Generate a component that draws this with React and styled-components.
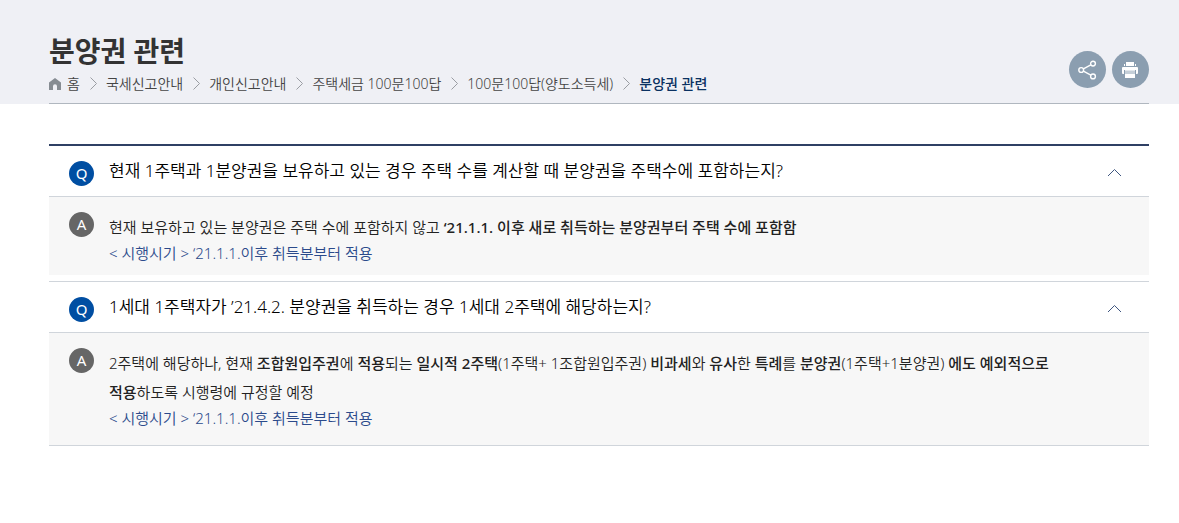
import React, {useState} from 'react';
import styled, {createGlobalStyle, css} from 'styled-components';

const GlobalStyle = createGlobalStyle`
  * {
    box-sizing: border-box;
  }

  body {
    margin: 0;
    background-color: #fff;
    color: #222;
    font-family: 'Noto Sans', 'Noto Sans CJK KR', sans-serif;
    font-size: 15px;
    font-weight: 350;
    word-break: keep-all;
  }
`;

const Header = styled.header`
  background-color: #eff0f5;
  padding: 0 30px 0 49px;
`;

const HeaderInner = styled.div`
  display: flex;
  align-items: flex-end;
  justify-content: space-between;
  padding: 30px 0 8px;
  border-bottom: 1px solid #b0b7bf;
`;

const Title = styled.h1`
  margin: 0;
  color: #333;
  font-size: 28px;
  font-weight: 700;
  line-height: 42px;
`;

const Breadcrumb = styled.ol`
  display: flex;
  align-items: center;
  margin: 0;
  padding: 0;
  list-style: none;
  font-size: 14px;
  line-height: 23px;
`;

const Crumb = styled.li`
  display: flex;
  align-items: center;
`;

const CrumbLink = styled.a`
  display: flex;
  align-items: center;
  gap: 6px;
  color: #444;
  text-decoration: none;
`;

const Current = styled.strong`
  color: #0a3161;
  font-weight: 500;
`;

const Separator = styled.svg`
  margin: 0 9px 0 10px;
`;

const Tools = styled.div`
  display: flex;
  gap: 6px;
  padding-bottom: 7px;
`;

const ToolButton = styled.button`
  display: flex;
  align-items: center;
  justify-content: center;
  width: 37px;
  height: 37px;
  padding: 0;
  border: 0;
  border-radius: 50%;
  background-color: #8b9eb0;
  cursor: pointer;
`;

const List = styled.div`
  margin: 40px 30px 0 49px;
  border-top: 2px solid #2f4064;
`;

const Item = styled.section`
  & + & {
    margin-top: 6px;
    border-top: 1px solid #d0d5db;
    border-bottom: 1px solid #d0d5db;
  }
`;

const Heading = styled.h2`
  margin: 0;
  font-weight: 350;
`;

const Question = styled.button`
  display: flex;
  align-items: flex-start;
  width: 100%;
  padding: 11px 27px 10px 20px;
  border: 0;
  background-color: #fff;
  color: #000;
  font: inherit;
  font-size: 17px;
  line-height: 28px;
  text-align: left;
  cursor: pointer;
`;

const QuestionText = styled.span`
  flex: 1;
`;

const Badge = styled.span`
  flex: none;
  width: 25px;
  height: 25px;
  margin: ${({$answer}) => ($answer ? '0 15px 0 0' : '4px 15px 0 0')};
  border-radius: 50%;
  background-color: ${({$answer}) => ($answer ? '#666' : '#004ea2')};
  color: #fff;
  font-size: 15px;
  font-weight: 400;
  line-height: 25px;
  text-align: center;
`;

const Arrow = styled.svg`
  flex: none;
  margin-top: 8px;
  ${({$open}) => !$open && css`
    transform: rotate(180deg);
  `};
`;

const Answer = styled.div`
  display: flex;
  align-items: flex-start;
  padding: 15px 60px 11px 20px;
  border-top: 1px solid #d0d5db;
  background-color: #f7f7f7;

  ${Item} + ${Item} & {
    padding-bottom: 16px;
  }
`;

const AnswerText = styled.p`
  flex: 1;
  margin: 1px 0 0;
  line-height: 29px;

  b {
    font-weight: 500;
  }
`;

const Period = styled.span`
  display: block;
  color: #2b4a8b;
  line-height: 22px;
`;

const crumbs = ['국세신고안내', '개인신고안내', '주택세금 100문100답', '100문100답(양도소득세)'];

const faqs = [
  {
    question: '현재 1주택과 1분양권을 보유하고 있는 경우 주택 수를 계산할 때 분양권을 주택수에 포함하는지?',
    answer:
      <>
        현재 보유하고 있는 분양권은 주택 수에 포함하지 않고{' '}
        <b>‘21.1.1. 이후 새로 취득하는 분양권부터 주택 수에 포함함</b>
      </>,
  },
  {
    question: '1세대 1주택자가 ’21.4.2. 분양권을 취득하는 경우 1세대 2주택에 해당하는지?',
    answer:
      <>
        2주택에 해당하나, 현재 <b>조합원입주권</b>에 <b>적용</b>되는 <b>일시적 2주택</b>(1주택+ 1조합원입주권){' '}
        <b>비과세</b>와 <b>유사</b>한 <b>특례</b>를 <b>분양권</b>(1주택+1분양권) <b>에도 예외적으로 적용</b>하도록
        시행령에 규정할 예정
      </>,
  },
];

const Chevron = () =>
  <Separator width="7" height="13" viewBox="0 0 7 13" fill="none" stroke="#9a9da3" aria-hidden="true">
    <path d="M.5.5l6 6-6 6" />
  </Separator>;

const HomeIcon = () =>
  <svg width="12" height="12" viewBox="0 0 12 12" fill="#868c92" aria-hidden="true">
    <path d="M6 0l6 4.6V12H8V8.2a2 2 0 0 0-4 0V12H0V4.6z" />
  </svg>;

const ShareIcon = () =>
  <svg width="19" height="20" viewBox="0 0 19 20" fill="none" stroke="#fff" strokeWidth="1.4" aria-hidden="true">
    <circle cx="3.2" cy="10" r="2.4" />
    <circle cx="15" cy="3.6" r="2.4" />
    <circle cx="15" cy="16.4" r="2.4" />
    <path d="M5.4 8.8l7.4-4M5.4 11.2l7.4 4" />
  </svg>;

const PrintIcon = () =>
  <svg width="17" height="17" viewBox="0 0 17 17" fill="#fff" aria-hidden="true">
    <path d="M4 1h8v4H4zM2 3h1v2H2zM13 3h1v2h-1z" />
    <path d="M1 6h14a1 1 0 0 1 1 1v5a1 1 0 0 1-1 1h-1V9H2v4H1a1 1 0 0 1-1-1V7a1 1 0 0 1 1-1z" />
    <path d="M3 13h10v4H3z" />
    <path d="M3 9h10v1H3z" opacity=".75" />
    <path d="M3 10h10v3H3z" opacity=".5" />
  </svg>;

const Faq = ({question, answer}) => {
  const [open, setOpen] = useState(true);

  return (
    <Item>
      <Heading>
        <Question type="button" aria-expanded={open} onClick={() => setOpen(!open)}>
          <Badge>Q</Badge>
          <QuestionText>{question}</QuestionText>
          <Arrow $open={open} width="15" height="15" viewBox="0 0 15 15" fill="none" stroke="#3f5680" aria-hidden="true">
            <path d="M1 11l6.5-6.5L14 11" />
          </Arrow>
        </Question>
      </Heading>
      {open &&
        <Answer>
          <Badge $answer>A</Badge>
          <AnswerText>
            {answer}
            <Period>&lt; 시행시기 &gt; ‘21.1.1.이후 취득분부터 적용</Period>
          </AnswerText>
        </Answer>}
    </Item>
  );
};

const App = () =>
  <>
    <GlobalStyle />
    <Header>
      <HeaderInner>
        <div>
          <Title>분양권 관련</Title>
          <nav>
            <Breadcrumb>
              <Crumb>
                <CrumbLink href="#">
                  <HomeIcon />
                  홈
                </CrumbLink>
              </Crumb>
              {crumbs.map(crumb =>
                <Crumb key={crumb}>
                  <Chevron />
                  <CrumbLink href="#">{crumb}</CrumbLink>
                </Crumb>
              )}
              <Crumb>
                <Chevron />
                <Current>분양권 관련</Current>
              </Crumb>
            </Breadcrumb>
          </nav>
        </div>
        <Tools>
          <ToolButton type="button" aria-label="공유">
            <ShareIcon />
          </ToolButton>
          <ToolButton type="button" aria-label="인쇄">
            <PrintIcon />
          </ToolButton>
        </Tools>
      </HeaderInner>
    </Header>
    <List>
      {faqs.map(faq => <Faq key={faq.question} {...faq} />)}
    </List>
  </>;

export default App;
